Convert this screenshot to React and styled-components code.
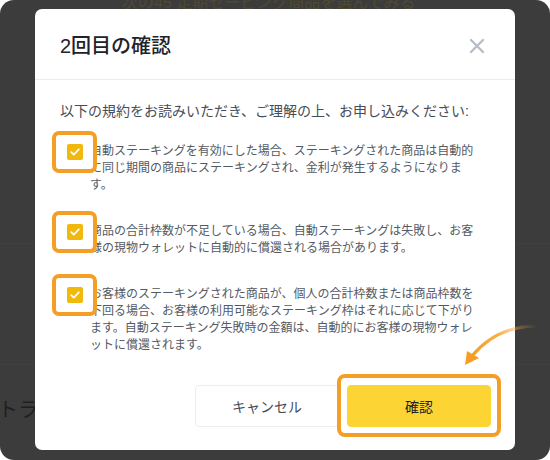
import React from 'react';
import styled, { createGlobalStyle } from 'styled-components';

const GlobalStyle = createGlobalStyle`
  html, body {
    margin: 0;
    padding: 0;
    background: #ffffff;
  }
  * { box-sizing: border-box; }
`;

const FONT = `"Liberation Sans", "Noto Sans CJK JP", "Noto Sans", sans-serif`;

const Frame = styled.div`
  position: relative;
  width: 550px;
  height: 460px;
  border-radius: 14px;
  overflow: hidden;
  background: #3c3c3c;
  font-family: ${FONT};
`;

const Behind = styled.div`
  display: flex;
  flex-direction: column;
  height: 100%;
`;

const BehindHeadline = styled.div`
  margin-top: -8px;
  padding-left: 122px;
  font-size: 16px;
  line-height: 22px;
  color: #4f4a32;
  white-space: nowrap;
`;

const BehindRule = styled.div`
  margin-top: ${p => p.$top}px;
  height: 1px;
  background: #404040;
`;

const BehindLabel = styled.div`
  margin-top: 32px;
  margin-left: -2px;
  font-size: 20px;
  line-height: 26px;
  color: #1f1f1f;
  white-space: nowrap;
`;

const Modal = styled.div`
  position: absolute;
  left: 35px;
  top: 9px;
  width: 480px;
  height: 441px;
  background: #ffffff;
  border-radius: 7px;
  display: flex;
  flex-direction: column;
`;

const Header = styled.div`
  display: flex;
  align-items: center;
  justify-content: space-between;
  height: 71px;
  padding: 4px 28px 0 25px;
  border-bottom: 1px solid #eaecef;
`;

const Title = styled.h2`
  margin: 0;
  font-size: 20px;
  font-weight: 500;
  color: #1e2329;
  line-height: 28px;
`;

const Close = styled.button`
  display: flex;
  align-items: center;
  justify-content: center;
  width: 20px;
  height: 20px;
  padding: 0;
  border: 0;
  background: none;
  color: #b7bdc6;
`;

const Body = styled.div`
  padding: 21px 24px 0 25px;
  flex: 1;
`;

const Intro = styled.p`
  margin: 0 0 22px;
  font-size: 14px;
  line-height: 20px;
  color: #474d57;
`;

const Item = styled.div`
  display: flex;
  align-items: flex-start;
  gap: 7px;
  padding-left: 7px;
  margin-bottom: 29px;
`;

const CheckWrap = styled.div`
  position: relative;
  flex: none;
  width: 16px;
  height: 16px;
  margin-top: 0.5px;
`;

const Highlight = styled.div`
  position: absolute;
  left: -15px;
  top: -13px;
  width: 45px;
  height: 42px;
  border: 4px solid #f49e25;
  border-radius: 7px;
  background: #ffffff;
`;

const Check = styled.div`
  position: relative;
  width: 16px;
  height: 16px;
  border-radius: 2px;
  background: #f0b90b;
  display: flex;
  align-items: center;
  justify-content: center;
`;

const ItemText = styled.p`
  margin: 0;
  width: 393px;
  font-size: 12px;
  line-height: 17px;
  color: #545a63;
`;

const Footer = styled.div`
  display: flex;
  justify-content: flex-end;
  gap: 8px;
  padding: 0 24px 23px;
`;

const ButtonWrap = styled.div`
  position: relative;
`;

const Button = styled.button`
  position: relative;
  width: 144px;
  height: 42px;
  border-radius: 4px;
  font-family: ${FONT};
  font-size: 14px;
  cursor: pointer;
  border: 1px solid ${p => (p.$primary ? '#fcd535' : '#eaecef')};
  background: ${p => (p.$primary ? '#fcd535' : '#ffffff')};
  color: ${p => (p.$primary ? '#1e2329' : '#474d57')};
`;

const ButtonHighlight = styled.div`
  position: absolute;
  left: -10px;
  top: -11px;
  right: -10px;
  bottom: -10px;
  border: 4px solid #f49e25;
  border-radius: 8px;
  background: #ffffff;
`;

const Arrow = styled.svg`
  position: absolute;
  left: 455px;
  top: 318px;
`;

const items = [
  '自動ステーキングを有効にした場合、ステーキングされた商品は自動的に同じ期間の商品にステーキングされ、金利が発生するようになります。',
  '商品の合計枠数が不足している場合、自動ステーキングは失敗し、お客様の現物ウォレットに自動的に償還される場合があります。',
  'お客様のステーキングされた商品が、個人の合計枠数または商品枠数を下回る場合、お客様の利用可能なステーキング枠はそれに応じて下がります。自動ステーキング失敗時の金額は、自動的にお客様の現物ウォレットに償還されます。',
];

const CheckIcon = () => (
  <svg width="10" height="8" viewBox="0 0 10 8" fill="none">
    <path d="M1.2 4.2 L3.8 6.6 L8.8 1.4" stroke="#ffffff" strokeWidth="1.7" strokeLinecap="round" strokeLinejoin="round" />
  </svg>
);

export default function App() {
  return (
    <>
      <GlobalStyle />
      <Frame>
        <Behind>
          <BehindHeadline>次の45 定期セービング商品を選んでみる</BehindHeadline>
          <BehindRule $top={229} />
          <BehindRule $top={120} />
          <BehindLabel>トランザクション</BehindLabel>
        </Behind>

        <Modal>
          <Header>
            <Title>2回目の確認</Title>
            <Close aria-label="閉じる">
              <svg width="16" height="16" viewBox="0 0 16 16">
                <path d="M2 2 L14 14 M14 2 L2 14" stroke="currentColor" strokeWidth="2.4" strokeLinecap="round" />
              </svg>
            </Close>
          </Header>

          <Body>
            <Intro>以下の規約をお読みいただき、ご理解の上、お申し込みください:</Intro>
            {items.map((text, i) => (
              <Item key={i}>
                <CheckWrap>
                  <Highlight />
                  <Check>
                    <CheckIcon />
                  </Check>
                </CheckWrap>
                <ItemText>{text}</ItemText>
              </Item>
            ))}
          </Body>

          <Footer>
            <Button>キャンセル</Button>
            <ButtonWrap>
              <ButtonHighlight />
              <Button $primary>確認</Button>
            </ButtonWrap>
          </Footer>
        </Modal>

        <Arrow width="95" height="55" viewBox="0 0 95 55">
          <defs>
            <linearGradient id="arrowFade" x1="1" y1="0" x2="0" y2="1">
              <stop offset="0" stopColor="#f7a531" stopOpacity="0" />
              <stop offset="0.45" stopColor="#f7a531" stopOpacity="0.9" />
              <stop offset="1" stopColor="#f49e25" />
            </linearGradient>
          </defs>
          <path d="M82 8 Q42 8 17 38" stroke="url(#arrowFade)" strokeWidth="3.2" fill="none" strokeLinecap="round" />
          <path d="M10 47 L12 33 L24 40 Z" fill="#f49e25" />
        </Arrow>
      </Frame>
    </>
  );
}
